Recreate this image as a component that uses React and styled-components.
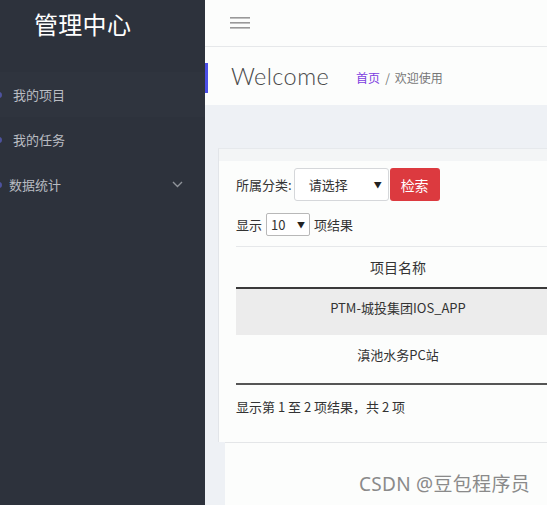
import React from "react";
import styled, { createGlobalStyle } from "styled-components";

const Global = createGlobalStyle`
  html, body { margin: 0; padding: 0; height: 100%; overflow: hidden; }
  body { font-family: "Noto Sans CJK SC", "Noto Sans", sans-serif; background: #eef1f5; }
  * { box-sizing: border-box; }
`;

const Layout = styled.div`
  display: flex;
  width: 547px;
  height: 505px;
  overflow: hidden;
  position: relative;
`;

const Sidebar = styled.aside`
  width: 205px;
  flex: none;
  background: #2d323c;
  display: flex;
  flex-direction: column;
`;

const Brand = styled.div`
  height: 50px;
  padding-left: 34px;
  padding-top: 6px;
  color: #fff;
  font-size: 24px;
  letter-spacing: 0.3px;
  line-height: 36px;
`;

const Menu = styled.ul`
  list-style: none;
  margin: 22px 0 0;
  padding: 0;
`;

const MenuItem = styled.li`
  height: 45px;
  display: flex;
  align-items: center;
  padding-left: ${p => p.$pl}px;
  color: #b9bcc2;
  font-size: 13px;
  position: relative;
  background: ${p => (p.$active ? "#2f343e" : "transparent")};
  &::before {
    content: "";
    position: absolute;
    left: -4px;
    top: 50%;
    width: 6px;
    height: 6px;
    margin-top: -3px;
    border-radius: 50%;
    background: #5b5fc7;
    opacity: 0.7;
  }
`;

const Chevron = styled.svg`
  margin-left: auto;
  margin-right: 22px;
`;

const Main = styled.div`
  flex: 1;
  display: flex;
  flex-direction: column;
  min-width: 0;
  overflow: hidden;
`;

const TopBar = styled.div`
  height: 47px;
  flex: none;
  background: #fcfdfc;
  border-bottom: 1px solid #e6e8ea;
  display: flex;
  align-items: center;
  padding-left: 25px;
`;

const PageHeader = styled.div`
  height: 58px;
  flex: none;
  background: #fcfdfc;
  display: flex;
  align-items: center;
  padding-left: 26px;
  position: relative;
  &::before {
    content: "";
    position: absolute;
    left: 0;
    top: 16px;
    width: 3px;
    height: 30px;
    background: #4b4ee6;
  }
`;

const Title = styled.h1`
  margin: 0;
  font-family: "Lato", "Noto Sans", sans-serif;
  font-weight: 300;
  font-size: 23.5px;
  color: #4a4a4a;
  letter-spacing: 0.4px;
`;

const Crumbs = styled.div`
  margin-left: 27px;
  font-size: 12px;
  color: #777;
  display: flex;
  gap: 5px;
  margin-top: 3px;
`;

const CrumbLink = styled.span`
  color: #7c3ee0;
`;

const Content = styled.div`
  flex: 1;
  background: #eef1f5;
  padding: 43px 0 0 13px;
  display: flex;
  flex-direction: column;
`;

const Card = styled.div`
  width: 360px;
  background: #fcfdfc;
  border-left: 1px solid #e2e5e9;
  border-top: 1px solid #e6e9ec;
`;

const CardHead = styled.div`
  height: 12px;
  background: #f3f5f6;
`;

const CardBody = styled.div`
  padding: 7px 0 0 17px;
`;

const FilterRow = styled.div`
  display: flex;
  align-items: center;
  font-size: 13px;
  color: #333;
`;

const SelectBox = styled.div`
  width: ${p => p.$w}px;
  height: ${p => p.$h}px;
  border: 1px solid ${p => p.$border || "#d5d7da"};
  border-radius: ${p => p.$r || 3}px;
  background: #fff;
  display: flex;
  align-items: center;
  padding-left: ${p => p.$pl}px;
  padding-right: ${p => p.$pr || 8}px;
  font-size: 13px;
  color: #333;
  justify-content: space-between;
`;

const Caret = styled.span`
  font-size: 8px;
  color: #222;
`;

const RedButton = styled.button`
  width: 50px;
  height: 33px;
  margin-left: 1px;
  border: none;
  border-radius: 3px;
  background: #dc3a3f;
  color: #fff;
  font-family: inherit;
  font-size: 14px;
  padding: 0;
`;

const LengthRow = styled.div`
  display: flex;
  align-items: center;
  gap: 4px;
  margin-top: 12px;
  font-size: 13px;
  color: #333;
`;

const Table = styled.table`
  margin-top: 10px;
  width: 324px;
  border-collapse: collapse;
  font-size: 13px;
  color: #333;
`;

const Th = styled.th`
  height: 41px;
  font-weight: 400;
  font-size: 14px;
  border-top: 1px solid #e6e8ea;
  border-bottom: 2px solid #3a3a3a;
  text-align: center;
`;

const Td = styled.td`
  height: ${p => p.$h}px;
  text-align: center;
  background: ${p => (p.$odd ? "#ececec" : "#fcfdfc")};
  border-bottom: ${p => (p.$last ? "2px solid #555" : "none")};
  padding: 0 0 ${p => p.$pb || 0}px;
`;

const Info = styled.div`
  font-size: 13px;
  color: #333;
  padding: 12px 0 0;
  height: 57px;
`;

const Footer = styled.div`
  flex: 1;
  margin-left: 7px;
  background: #fcfdfc;
  border-top: 1px solid #e4e6e8;
`;

const Watermark = styled.div`
  position: absolute;
  right: 17px;
  bottom: 8px;
  font-size: 19px;
  color: #8a8a8a;
  letter-spacing: 0.3px;
  font-family: "Noto Sans", "Noto Sans CJK SC", sans-serif;
`;

export default function App() {
  return (
    <>
      <Global />
      <Layout>
        <Sidebar>
          <Brand>管理中心</Brand>
          <Menu>
            <MenuItem $active $pl={13}>我的项目</MenuItem>
            <MenuItem $pl={13}>我的任务</MenuItem>
            <MenuItem $pl={9}>
              数据统计
              <Chevron width="11" height="7" viewBox="0 0 11 7" fill="none">
                <path d="M1 1l4.5 4.5L10 1" stroke="#8f939a" strokeWidth="1.4" />
              </Chevron>
            </MenuItem>
          </Menu>
        </Sidebar>
        <Main>
          <TopBar>
            <svg width="20" height="14" viewBox="0 0 20 14">
              <rect x="0" y="1" width="20" height="1.6" fill="#999" />
              <rect x="0" y="6" width="20" height="1.6" fill="#999" />
              <rect x="0" y="11" width="20" height="1.6" fill="#999" />
            </svg>
          </TopBar>
          <PageHeader>
            <Title>Welcome</Title>
            <Crumbs>
              <CrumbLink>首页</CrumbLink>
              <span>/</span>
              <span>欢迎使用</span>
            </Crumbs>
          </PageHeader>
          <Content>
            <Card>
              <CardHead />
              <CardBody>
                <FilterRow>
                  <span>所属分类:</span>
                  <SelectBox $w={95} $h={33} $pl={14} $pr={6} style={{ marginLeft: 2 }}>
                    请选择 <Caret>▼</Caret>
                  </SelectBox>
                  <RedButton>检索</RedButton>
                </FilterRow>
                <LengthRow>
                  <span>显示</span>
                  <SelectBox $w={44} $h={23} $pl={4} $pr={4} $border="#b8b8b8" $r={2}>
                    10 <Caret>▼</Caret>
                  </SelectBox>
                  <span>项结果</span>
                </LengthRow>
                <Table>
                  <thead>
                    <tr><Th>项目名称</Th></tr>
                  </thead>
                  <tbody>
                    <tr><Td $odd $h={47} $pb={8}>PTM-城投集团IOS_APP</Td></tr>
                    <tr><Td $last $h={49} $pb={9}>滇池水务PC站</Td></tr>
                  </tbody>
                </Table>
                <Info>显示第 1 至 2 项结果，共 2 项</Info>
              </CardBody>
            </Card>
            <Footer />
          </Content>
        </Main>
        <Watermark>CSDN @豆包程序员</Watermark>
      </Layout>
    </>
  );
}
